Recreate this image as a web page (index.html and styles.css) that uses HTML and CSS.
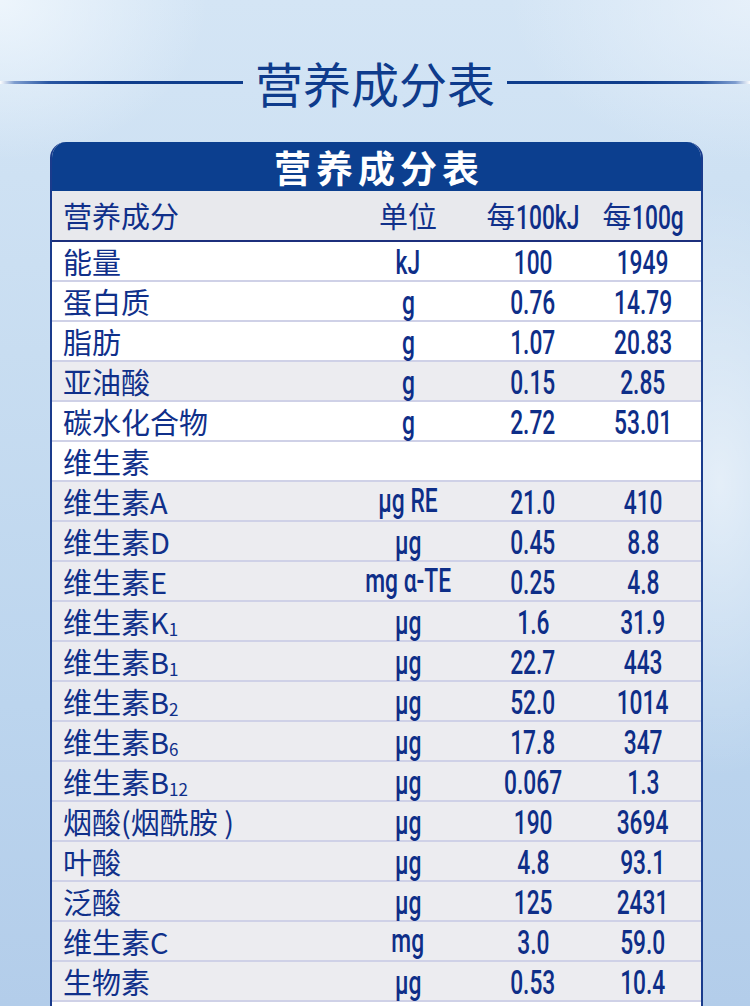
FILE: index.html
```html
<!DOCTYPE html>
<html lang="zh-CN">
<head>
<meta charset="utf-8">
<title>营养成分表</title>
<link rel="stylesheet" href="styles.css">
</head>
<body>
<div class="page">
  <div class="title-bar">
    <span class="rule rule-left"></span>
    <h1 class="title">营养成分表</h1>
    <span class="rule rule-right"></span>
  </div>

  <section class="card">
    <div class="card-head">营养成分表</div>

    <div class="row row-head">
      <div class="c-name">营养成分</div>
      <div class="c-unit">单位</div>
      <div class="c-val"><span class="cjk">每</span><span class="num shrink-kj">100kJ</span></div>
      <div class="c-val"><span class="cjk">每</span><span class="num shrink-g">100g</span></div>
    </div>

    <div class="row white">
      <div class="c-name">能量</div>
      <div class="c-unit"><span class="num">kJ</span></div>
      <div class="c-val"><span class="num">100</span></div>
      <div class="c-val"><span class="num">1949</span></div>
    </div>
    <div class="row white">
      <div class="c-name">蛋白质</div>
      <div class="c-unit"><span class="num">g</span></div>
      <div class="c-val"><span class="num">0.76</span></div>
      <div class="c-val"><span class="num">14.79</span></div>
    </div>
    <div class="row white">
      <div class="c-name">脂肪</div>
      <div class="c-unit"><span class="num">g</span></div>
      <div class="c-val"><span class="num">1.07</span></div>
      <div class="c-val"><span class="num">20.83</span></div>
    </div>
    <div class="row grey">
      <div class="c-name">亚油酸</div>
      <div class="c-unit"><span class="num">g</span></div>
      <div class="c-val"><span class="num">0.15</span></div>
      <div class="c-val"><span class="num">2.85</span></div>
    </div>
    <div class="row white">
      <div class="c-name">碳水化合物</div>
      <div class="c-unit"><span class="num">g</span></div>
      <div class="c-val"><span class="num">2.72</span></div>
      <div class="c-val"><span class="num">53.01</span></div>
    </div>
    <div class="row white">
      <div class="c-name">维生素</div>
      <div class="c-unit"></div>
      <div class="c-val"></div>
      <div class="c-val"></div>
    </div>
    <div class="row grey">
      <div class="c-name">维生素A</div>
      <div class="c-unit"><span class="num up">μg RE</span></div>
      <div class="c-val"><span class="num">21.0</span></div>
      <div class="c-val"><span class="num">410</span></div>
    </div>
    <div class="row grey">
      <div class="c-name">维生素D</div>
      <div class="c-unit"><span class="num">μg</span></div>
      <div class="c-val"><span class="num">0.45</span></div>
      <div class="c-val"><span class="num">8.8</span></div>
    </div>
    <div class="row grey">
      <div class="c-name">维生素E</div>
      <div class="c-unit"><span class="num up">mg α-TE</span></div>
      <div class="c-val"><span class="num">0.25</span></div>
      <div class="c-val"><span class="num">4.8</span></div>
    </div>
    <div class="row grey">
      <div class="c-name">维生素K<sub class="sub">1</sub></div>
      <div class="c-unit"><span class="num">μg</span></div>
      <div class="c-val"><span class="num">1.6</span></div>
      <div class="c-val"><span class="num">31.9</span></div>
    </div>
    <div class="row grey">
      <div class="c-name">维生素B<sub class="sub">1</sub></div>
      <div class="c-unit"><span class="num">μg</span></div>
      <div class="c-val"><span class="num">22.7</span></div>
      <div class="c-val"><span class="num">443</span></div>
    </div>
    <div class="row grey">
      <div class="c-name">维生素B<sub class="sub">2</sub></div>
      <div class="c-unit"><span class="num">μg</span></div>
      <div class="c-val"><span class="num">52.0</span></div>
      <div class="c-val"><span class="num">1014</span></div>
    </div>
    <div class="row grey">
      <div class="c-name">维生素B<sub class="sub">6</sub></div>
      <div class="c-unit"><span class="num">μg</span></div>
      <div class="c-val"><span class="num">17.8</span></div>
      <div class="c-val"><span class="num">347</span></div>
    </div>
    <div class="row grey">
      <div class="c-name">维生素B<sub class="sub">12</sub></div>
      <div class="c-unit"><span class="num">μg</span></div>
      <div class="c-val"><span class="num">0.067</span></div>
      <div class="c-val"><span class="num">1.3</span></div>
    </div>
    <div class="row grey">
      <div class="c-name">烟酸(烟酰胺 )</div>
      <div class="c-unit"><span class="num">μg</span></div>
      <div class="c-val"><span class="num">190</span></div>
      <div class="c-val"><span class="num">3694</span></div>
    </div>
    <div class="row grey">
      <div class="c-name">叶酸</div>
      <div class="c-unit"><span class="num">μg</span></div>
      <div class="c-val"><span class="num">4.8</span></div>
      <div class="c-val"><span class="num">93.1</span></div>
    </div>
    <div class="row grey">
      <div class="c-name">泛酸</div>
      <div class="c-unit"><span class="num">μg</span></div>
      <div class="c-val"><span class="num">125</span></div>
      <div class="c-val"><span class="num">2431</span></div>
    </div>
    <div class="row grey">
      <div class="c-name">维生素C</div>
      <div class="c-unit"><span class="num up">mg</span></div>
      <div class="c-val"><span class="num">3.0</span></div>
      <div class="c-val"><span class="num">59.0</span></div>
    </div>
    <div class="row grey">
      <div class="c-name">生物素</div>
      <div class="c-unit"><span class="num">μg</span></div>
      <div class="c-val"><span class="num">0.53</span></div>
      <div class="c-val"><span class="num">10.4</span></div>
    </div>
    <div class="row white">
      <div class="c-name">矿物质</div>
      <div class="c-unit"></div>
      <div class="c-val"></div>
      <div class="c-val"></div>
    </div>
  </section>
</div>
</body>
</html>
```

FILE: styles.css
```css
html, body {
  margin: 0;
  padding: 0;
}

body {
  width: 750px;
  height: 1006px;
  overflow: hidden;
  font-family: "Noto Sans CJK SC", "Noto Sans", sans-serif;
}

.page {
  width: 750px;
  height: 1006px;
  overflow: hidden;
  background:
    radial-gradient(ellipse 180px 420px at 96% 48%, rgba(255,255,255,0.55), rgba(255,255,255,0) 70%),
    radial-gradient(ellipse 260px 200px at 0% 0%, rgba(240,247,253,0.9), rgba(240,247,253,0) 80%),
    radial-gradient(ellipse 300px 200px at 100% 0%, rgba(232,241,250,0.9), rgba(232,241,250,0) 80%),
    linear-gradient(180deg, #d4e5f5 0%, #c8ddf1 35%, #bcd5ee 70%, #b3cdea 100%);
}

/* ---------- title ---------- */
.title-bar {
  display: flex;
  align-items: center;
  gap: 12px;
  padding-top: 54px;
}

.title {
  margin: 0;
  font-size: 48px;
  line-height: 56px;
  font-weight: 400;
  color: #0e3b8c;
  white-space: nowrap;
}

.rule {
  flex: 1;
  height: 3px;
}

.rule-left {
  background: linear-gradient(90deg, rgba(255,255,255,0.95) 0%, #7e9dcf 6%, #2a57a3 20%, #0f3d8c 45%, #0f3d8c 100%);
}

.rule-right {
  background: linear-gradient(270deg, rgba(255,255,255,0.95) 0%, #7e9dcf 6%, #2a57a3 20%, #0f3d8c 45%, #0f3d8c 100%);
}

/* ---------- card ---------- */
.card {
  box-sizing: border-box;
  width: 653px;
  margin: 32px 0 0 50px;
  border-left: 2px solid #1a3b8c;
  border-right: 2px solid #1a3b8c;
  border-radius: 16px 16px 0 0;
  overflow: hidden;
  background: #ffffff;
}

.card-head {
  height: 49px;
  line-height: 50px;
  background: #0c3f8f;
  color: #ffffff;
  text-align: center;
  font-size: 37px;
  font-weight: 700;
  letter-spacing: 5px;
  padding-left: 5px;
  overflow: visible;
}

.row {
  box-sizing: border-box;
  display: grid;
  grid-template-columns: 298px 116px 134px 86px;
  height: 40px;
  border-bottom: 2px solid #cfd1e7;
  color: #10308a;
  font-size: 29px;
  line-height: 38px;
}

.row-head {
  height: 51px;
  line-height: 49px;
  background: #e8e9ed;
  border-bottom: 2px solid #1c2f7c;
}

.white { background: #ffffff; }
.grey { background: #ececf0; }

.c-name {
  padding-left: 11px;
  white-space: nowrap;
}

.c-unit, .c-val {
  display: flex;
  justify-content: center;
  align-items: center;
  white-space: nowrap;
}

.num {
  display: inline-block;
  position: relative;
  top: 2px;
  font-family: Roboto, "Liberation Sans", sans-serif;
  font-weight: 500;
  font-size: 33px;
  color: #0e2e88;
  transform: scaleX(0.69);
  transform-origin: center;
}

.num.up {
  top: 0;
}

.row-head .num {
  transform-origin: left center;
}

.shrink-kj { margin-right: -28px; }
.shrink-g { margin-right: -23px; }

.cjk {
  font-size: 29px;
}

.sub {
  font-size: 17px;
  line-height: 0;
  vertical-align: -2px;
}
```
